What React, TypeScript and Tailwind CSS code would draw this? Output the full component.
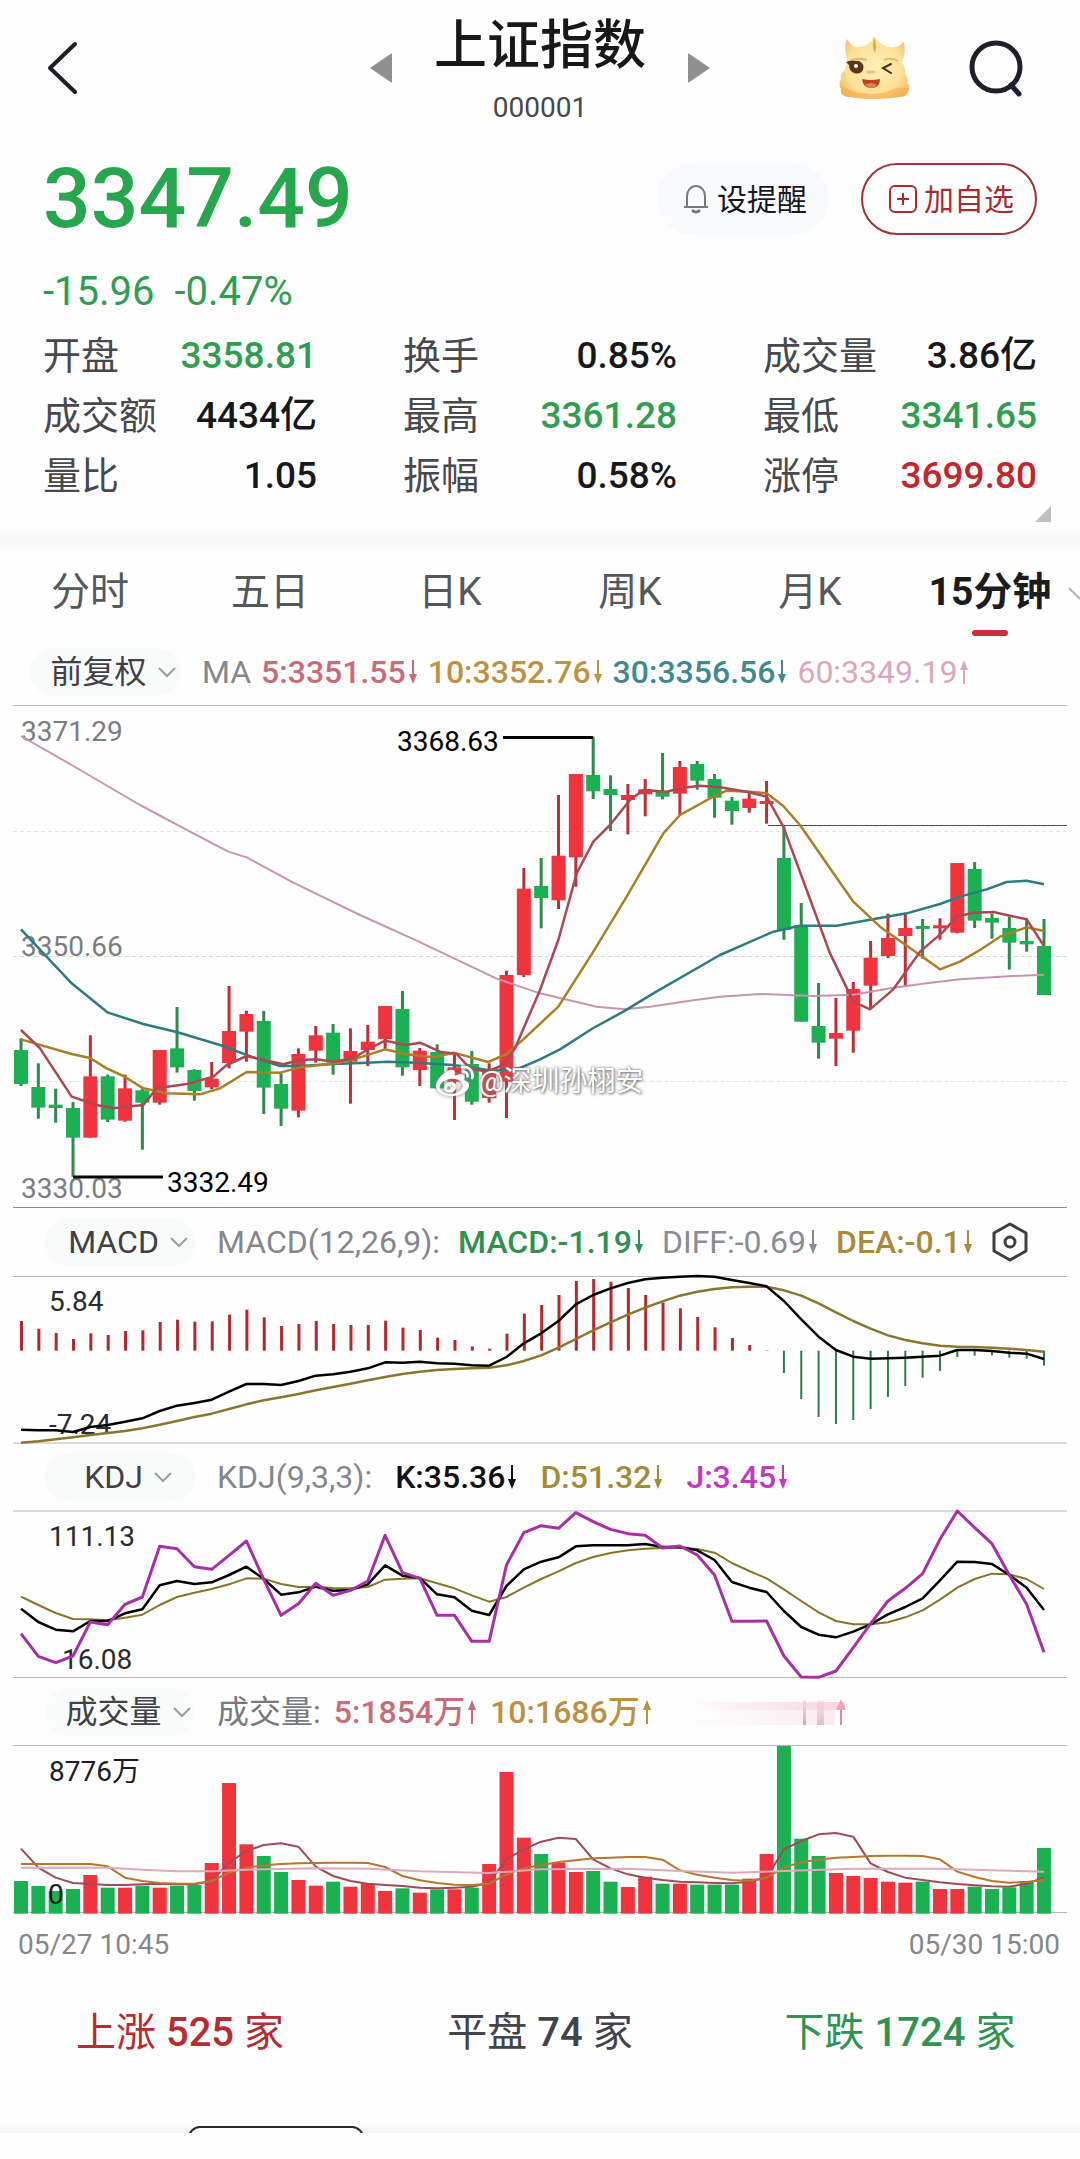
import React from "react";
import { FaWeibo } from "react-icons/fa";

const RED = "#f1333d";
const GREEN = "#1bb052";
const FIRST_X = 21;
const STEP = 1023 / 59;
const xAt = (i: number) => FIRST_X + i * STEP;

/* high, body top, body bottom, low (thirds of a pixel), r = rising, g = falling */
type Candle = [number, number, number, number, "r" | "g"];
const CANDLES: Candle[] = [
  [1015, 1050, 1152, 1158, "g"], [1090, 1161, 1223, 1256, "g"], [1166, 1214, 1224, 1268, "g"],
  [1206, 1224, 1313, 1430, "g"], [1006, 1129, 1313, 1313, "r"], [1124, 1129, 1259, 1266, "g"],
  [1124, 1165, 1262, 1265, "r"], [1165, 1171, 1208, 1349, "g"], [1050, 1050, 1208, 1214, "r"],
  [921, 1045, 1102, 1118, "g"], [1108, 1110, 1173, 1202, "g"], [1086, 1136, 1162, 1168, "r"],
  [858, 993, 1089, 1105, "r"], [932, 942, 995, 1085, "r"], [933, 963, 1163, 1242, "g"],
  [1120, 1152, 1226, 1278, "g"], [1045, 1062, 1232, 1252, "r"], [978, 1006, 1052, 1088, "r"],
  [972, 998, 1088, 1124, "g"], [985, 1053, 1085, 1211, "r"], [975, 1025, 1050, 1098, "r"],
  [918, 918, 1017, 1048, "r"], [873, 927, 1102, 1127, "g"], [1044, 1052, 1110, 1158, "r"],
  [1033, 1056, 1165, 1165, "g"], [1060, 1102, 1145, 1260, "r"], [1053, 1092, 1205, 1214, "g"],
  [1090, 1115, 1194, 1208, "r"], [812, 825, 1145, 1254, "r"], [504, 566, 825, 831, "r"],
  [474, 558, 594, 685, "g"], [285, 467, 601, 627, "r"], [222, 222, 472, 560, "r"],
  [110, 225, 274, 297, "g"], [226, 267, 285, 393, "g"], [252, 285, 300, 403, "r"],
  [237, 268, 283, 349, "r"], [159, 275, 290, 298, "g"], [183, 201, 281, 345, "r"],
  [183, 192, 242, 269, "g"], [222, 237, 293, 353, "g"], [291, 302, 333, 374, "g"],
  [280, 296, 324, 338, "r"], [243, 303, 312, 371, "r"], [380, 474, 690, 719, "g"],
  [609, 675, 965, 965, "g"], [849, 978, 1028, 1076, "g"], [894, 999, 1016, 1098, "r"],
  [846, 867, 992, 1058, "r"], [723, 773, 857, 925, "r"], [641, 714, 768, 774, "r"],
  [642, 684, 708, 858, "r"], [657, 678, 685, 776, "g"], [655, 676, 683, 719, "r"],
  [489, 489, 698, 700, "r"], [486, 507, 662, 684, "g"], [641, 654, 668, 716, "g"],
  [650, 684, 728, 809, "g"], [655, 723, 733, 755, "g"], [657, 738, 885, 885, "g"],
];

const PRICE_MA60 = [63,108,215,195,420,315,580,400,685,455,740,472,880,548,1080,645,1250,722,1490,836,1620,880,1790,920,1875,928,1950,920,2080,901,2160,890,2280,882,2440,888,2560,884,2680,863,2780,850,2880,838,3000,830,3132,824];
const PRICE_MA30 = [63,688,215,850,322,937,430,972,530,996,660,1035,760,1072,840,1098,900,1098,1000,1092,1100,1088,1160,1085,1250,1088,1360,1095,1480,1112,1560,1104,1620,1078,1680,1048,1780,984,1870,935,1960,880,2160,765,2320,695,2400,677,2510,677,2660,650,2720,640,2820,612,2880,590,2960,568,3020,546,3080,542,3132,553];
const PRICE_MA10 = [63,1018,215,1062,270,1074,320,1105,370,1128,430,1165,500,1180,600,1183,660,1165,740,1116,840,1118,900,1102,960,1095,1010,1090,1080,1072,1155,1048,1220,1063,1300,1072,1360,1058,1465,1086,1520,1062,1570,1018,1675,920,1780,755,1880,590,1990,400,2040,345,2140,290,2180,272,2250,275,2300,280,2350,318,2400,375,2490,505,2560,605,2640,680,2820,808,2880,785,2940,750,3000,710,3080,682,3132,693];
const PRICE_MA5 = [63,990,120,1045,215,1190,290,1215,340,1225,430,1215,470,1165,560,1152,640,1130,680,1095,740,1068,850,1093,900,1080,950,1078,1000,1085,1060,1075,1100,1050,1155,1022,1220,1035,1260,1028,1320,1055,1370,1062,1410,1105,1460,1115,1510,1095,1545,1045,1620,870,1675,720,1730,520,1780,425,1830,375,1890,300,1930,270,2000,275,2040,265,2100,257,2160,262,2240,275,2300,290,2350,380,2420,570,2490,760,2560,905,2610,928,2680,868,2760,755,2830,695,2870,650,2920,638,2980,636,3080,658,3132,738];

const MACD_BARS = [330,353,366,384,367,372,360,358,333,326,332,331,311,296,319,345,339,330,339,342,342,329,350,357,380,387,406,413,368,308,282,252,210,204,212,231,252,275,292,318,349,381,402,418,486,564,618,639,627,594,558,525,500,480,438,434,433,440,443,464];
const MACD_DIFF = [656,658,658,663,648,642,632,622,600,584,576,566,542,519,519,522,510,494,490,482,472,454,455,452,457,458,463,464,438,397,367,330,280,252,232,216,205,200,197,195,197,207,216,226,270,325,377,417,437,443,442,440,437,434,417,417,420,425,428,444];
const MACD_DEA = [695,691,685,679,672,666,660,652,641,630,618,608,594,580,568,559,549,538,528,518,508,498,489,482,477,474,472,470,463,450,433,410,384,358,334,311,290,271,254,242,234,229,227,227,238,254,277,304,330,353,373,387,397,404,407,408,410,413,417,422];

const KDJ_J = [1268,1336,1355,1335,1233,1241,1180,1158,1006,1013,1067,1075,1033,990,1105,1213,1178,1117,1153,1138,1110,973,1085,1102,1213,1213,1291,1291,1062,965,944,952,905,932,955,968,973,1011,1005,1032,1092,1231,1231,1230,1335,1398,1399,1380,1310,1238,1170,1132,1088,985,900,950,998,1092,1180,1324];
const KDJ_K = [1193,1233,1256,1261,1230,1230,1207,1195,1123,1110,1119,1114,1092,1067,1104,1151,1144,1127,1139,1137,1120,1063,1094,1101,1150,1159,1199,1212,1125,1075,1052,1039,1006,1003,1003,1003,999,1008,1008,1018,1047,1113,1130,1143,1200,1248,1271,1279,1262,1240,1210,1188,1162,1108,1052,1053,1059,1092,1130,1197];
const KDJ_D = [1157,1182,1206,1224,1225,1228,1220,1211,1182,1158,1145,1134,1120,1102,1103,1119,1128,1127,1131,1132,1128,1106,1103,1102,1117,1132,1153,1172,1158,1130,1104,1081,1056,1038,1026,1018,1013,1011,1010,1014,1025,1056,1080,1102,1135,1170,1204,1230,1240,1240,1234,1219,1198,1166,1130,1104,1088,1090,1104,1134];

const VOLUME = [600,615,630,624,582,620,620,614,620,614,612,546,306,490,525,573,597,614,602,617,608,630,622,635,625,625,620,549,273,470,519,545,573,570,602,618,587,608,608,611,611,611,593,519,195,473,525,576,585,591,602,605,602,624,624,617,624,619,600,501];
const VOLUME_SIDE = "ggggrgrgrggrrrggrrgrrrgrgrgrrrgrrggrrgrgggrrgggrrrrrgrrggggg";
const VOL_MA5 = [503,560,590,606,609,612,612,610,608,610,610,600,545,510,492,487,497,557,585,600,608,612,615,620,622,620,617,605,535,505,482,470,474,535,562,580,590,597,602,604,606,607,602,590,505,480,460,456,467,547,573,590,597,604,609,613,616,617,608,590];
const VOL_MA10 = [549,549,549,549,549,556,590,600,606,608,608,600,575,560,553,549,547,546,545,545,546,558,585,598,606,611,612,608,580,562,553,543,538,532,530,528,528,536,568,581,590,597,600,590,560,543,536,530,528,525,524,524,525,535,572,588,600,605,603,597];
const VOL_MA60: [number, number][] = [[0,560],[5,560],[7,566],[9,571],[11,571],[13,566],[17,562],[20,563],[23,571],[27,576],[30,565],[35,563],[38,570],[41,575],[44,570],[48,563],[53,563],[56,568],[59,572]];

const pairs = (a: number[]) => {
  const out: string[] = [];
  for (let i = 0; i < a.length; i += 2) out.push(`${a[i] / 3},${a[i + 1] / 3}`);
  return out.join(" ");
};
const series = (a: number[]) => a.map((v, i) => `${xAt(i)},${v / 3}`).join(" ");

function Line({ points, color, width = 2.5 }: { points: string; color: string; width?: number }) {
  return <polyline points={points} fill="none" stroke={color} strokeWidth={width} strokeLinejoin="round" />;
}

function Rule({ y, from = 13, to = 1067, color = "#b8b8b8" }: { y: number; from?: number; to?: number; color?: string }) {
  return <line x1={from} x2={to} y1={y} y2={y} stroke={color} strokeWidth={1} />;
}

function PriceChart() {
  return (
    <svg viewBox="0 5 1080 504" className="block h-auto w-full" role="img" aria-label="15分钟 K线图">
      <Rule y={5.5} />
      <Rule y={507.5} color="#8f8f8f" />
      {[131, 256, 381].map((y) => (
        <line key={y} x1={13} x2={1067} y1={y + 0.5} y2={y + 0.5} stroke={y === 256 ? "#d6d6d6" : "#e4e4e4"} strokeDasharray="4 3" />
      ))}
      <line x1={768} x2={1067} y1={125.5} y2={125.5} stroke="#505050" />
      <g fontSize={28} fill="#7b7d80">
        <text x={21} y={41}>3371.29</text>
        <text x={21} y={256}>3350.66</text>
        <text x={21} y={498}>3330.03</text>
      </g>
      {CANDLES.map(([hi, top, bottom, lo, side], i) => {
        const x = xAt(i);
        return (
          <g key={i}>
            <rect x={x - 1.5} y={hi / 3} width={3} height={(lo - hi) / 3} fill={side === "r" ? "#c22d35" : "#2c8c4a"} />
            <rect x={x - 7} y={top / 3} width={14} height={Math.max(3, (bottom - top) / 3)} fill={side === "r" ? RED : GREEN} />
          </g>
        );
      })}
      <Line points={pairs(PRICE_MA60)} color="#cb94ae" width={2} />
      <Line points={pairs(PRICE_MA30)} color="#2c7c80" />
      <Line points={pairs(PRICE_MA10)} color="#ab7f24" />
      <Line points={pairs(PRICE_MA5)} color="#ad4852" />
      <path d="M503 37.5H593" stroke="#000" strokeWidth={3} />
      <path d="M73 477H163" stroke="#000" strokeWidth={3} />
      <g fontSize={28} fill="#000">
        <text x={397} y={51}>3368.63</text>
        <text x={167} y={492}>3332.49</text>
      </g>
    </svg>
  );
}

function MacdChart() {
  return (
    <svg viewBox="0 64 1080 169" className="block h-auto w-full overflow-visible" role="img" aria-label="MACD">
      <Rule y={65.5} />
      <Rule y={232} />
      <g fontSize={28} fill="#2b2b2d">
        <text x={49} y={100}>5.84</text>
        <text x={49} y={223}>-7.24</text>
      </g>
      {MACD_BARS.map((v, i) => (
        <rect key={i} x={xAt(i) - 1} y={Math.min(v, 419) / 3} width={v < 419 ? 3 : 2} height={Math.abs(v - 419) / 3} fill={v < 419 ? "#b5292e" : "#2d7d4c"} />
      ))}
      <Line points={series(MACD_DEA)} color="#8c752c" />
      <Line points={series(MACD_DIFF)} color="#000" />
    </svg>
  );
}

function KdjChart() {
  return (
    <svg viewBox="0 299 1080 169" className="block h-auto w-full overflow-visible" role="img" aria-label="KDJ">
      <Rule y={300} />
      <Rule y={466.5} />
      <g fontSize={28} fill="#2b2b2d">
        <text x={49} y={335}>111.13</text>
        <text x={62} y={458}>16.08</text>
      </g>
      <Line points={series(KDJ_D)} color="#85762a" width={2} />
      <Line points={series(KDJ_K)} color="#000" />
      <Line points={series(KDJ_J)} color="#aa2ea8" width={3} />
    </svg>
  );
}

function VolumeChart() {
  return (
    <svg viewBox="0 64 1080 170" className="block h-auto w-full" role="img" aria-label="成交量">
      <Rule y={64.5} />
      <Rule y={231.5} />
      {VOLUME.map((v, i) => (
        <rect key={i} x={xAt(i) - 7} y={v / 3} width={14} height={(698 - v) / 3} fill={VOLUME_SIDE[i] === "r" ? RED : GREEN} />
      ))}
      <Line points={series(VOL_MA5)} color="#a04c58" width={2} />
      <Line points={series(VOL_MA10)} color="#b5782c" width={2} />
      <Line points={VOL_MA60.map(([i, v]) => `${xAt(i)},${v / 3}`).join(" ")} color="#dfa9bd" width={2} />
      <g fontSize={28} fill="#1d1d1f">
        <text x={49} y={100}>8776万</text>
        <text x={48} y={223}>0</text>
      </g>
    </svg>
  );
}

function Arrow({ up = false }: { up?: boolean }) {
  return (
    <svg width="10" height="26" viewBox="0 0 10 26" className={up ? "rotate-180" : ""} aria-hidden="true">
      <path d="M5 1V20" stroke="currentColor" strokeWidth="2" />
      <path d="M1 15H9L5 25Z" fill="currentColor" />
    </svg>
  );
}

function Reading({ text, color, dir, strong = true }: { text: string; color: string; dir: "up" | "down"; strong?: boolean }) {
  return (
    <span className={`flex items-center gap-[2px] ${strong ? "font-medium" : ""} ${color}`}>
      {text}
      <Arrow up={dir === "up"} />
    </span>
  );
}

function Picker({ label }: { label: string }) {
  return (
    <button type="button" className="flex h-[48px] w-[150px] shrink-0 items-center justify-center gap-[10px] rounded-full bg-[#f9fbfb] pl-[17px] text-[#3f4145]">
      {label}
      <svg width="20" height="12" viewBox="0 0 20 12" fill="none" stroke="#9a9c9f" strokeWidth="2" aria-hidden="true">
        <path d="M2 2L10 10L18 2" />
      </svg>
    </button>
  );
}

function Indicator({ label, gap, children }: { label: string; gap: string; children: React.ReactNode }) {
  return (
    <div className="flex h-[66px] items-center pl-[45px] text-[32px] leading-[40px] whitespace-nowrap">
      <Picker label={label} />
      <div className={`ml-[22px] flex items-center ${gap}`}>{children}</div>
    </div>
  );
}

function Mascot() {
  return (
    <svg width="74" height="66" viewBox="0 0 74 66" aria-hidden="true">
      <defs>
        <radialGradient id="face" cx="0.5" cy="0.5" r="0.62">
          <stop offset="0" stopColor="#fff0b8" />
          <stop offset="0.65" stopColor="#fce199" />
          <stop offset="1" stopColor="#f4b75e" />
        </radialGradient>
      </defs>
      <path d="M11 28Q6 12 10 4Q14 11 20 12Q28 12 32 8Q35 7 37 1Q40 7 45 9Q52 13 57 12Q64 12 66 6Q70 14 65 28Q69 32 68 39Q72 43 70 48Q74 52 71 57Q70 62 62 62Q36 66 12 62Q3 62 4 54Q1 50 4 44Q3 38 8 35Q8 31 11 28Z" fill="url(#face)" />
      <path d="M4 50Q18 59 26 58Q44 61 56 54Q65 51 71 54Q70 61 62 62Q36 66 12 62Q3 61 4 50Z" fill="#f4ac48" opacity="0.55" />
      <path d="M37 3Q34 11 38 18Q41 11 37 3Z" fill="#dcb04d" />
      <path d="M13 26Q20 22 30 25M47 25Q54 22 61 26" stroke="#efb575" strokeWidth="2" fill="none" />
      <path d="M9 27Q13 25 22 26Q28 29 26 35Q23 40 17 38Q12 36 12 30Z" fill="#5f3318" />
      <circle cx="19" cy="31" r="2" fill="#fff" />
      <path d="M54 29L46 33L54 38" stroke="#4a3018" strokeWidth="2" fill="none" strokeLinecap="round" />
      <path d="M31 37H37" stroke="#e6c778" strokeWidth="3" strokeLinecap="round" />
      <path d="M25 44Q34 46 43 44Q43 53 34 53Q26 53 25 44Z" fill="#b94223" />
      <path d="M28 50Q34 46 40 50Q38 53 34 53Q30 53 28 50Z" fill="#ee7a4a" />
    </svg>
  );
}

const STATS: [string, string, string][] = [
  ["开盘", "3358.81", "text-[#2f9e50]"],
  ["换手", "0.85%", "text-[#18181b]"],
  ["成交量", "3.86亿", "text-[#18181b]"],
  ["成交额", "4434亿", "text-[#18181b]"],
  ["最高", "3361.28", "text-[#2f9e50]"],
  ["最低", "3341.65", "text-[#2f9e50]"],
  ["量比", "1.05", "text-[#18181b]"],
  ["振幅", "0.58%", "text-[#18181b]"],
  ["涨停", "3699.80", "text-[#c4262e]"],
];

const TABS = ["分时", "五日", "日K", "周K", "月K", "15分钟"];

export default function App() {
  return (
    <main className="min-h-screen w-full overflow-hidden bg-[#fefefe] font-['Roboto','Noto_Sans_CJK_SC',sans-serif] text-[#18181b]">
      <header className="grid h-[136px] grid-cols-[1fr_auto_1fr] items-center px-[45px]">
        <button type="button" aria-label="返回" className="w-[34px]">
          <svg width="34" height="54" viewBox="0 0 34 54" fill="none" stroke="#1c1c22" strokeWidth="4" strokeLinecap="round" strokeLinejoin="round">
            <path d="M30 3L5 27L30 51" />
          </svg>
        </button>
        <div className="flex items-center gap-[42px]">
          <button type="button" aria-label="上一个">
            <svg width="22" height="30" viewBox="0 0 22 30"><path d="M22 0V30L0 15Z" fill="#8f8f8f" /></svg>
          </button>
          <div className="flex flex-col items-center gap-2">
            <h1 className="text-[53px] leading-[72px] font-medium">上证指数</h1>
            <span className="text-[28px] leading-[36px] text-[#46484d]">000001</span>
          </div>
          <button type="button" aria-label="下一个">
            <svg width="22" height="30" viewBox="0 0 22 30"><path d="M0 0V30L22 15Z" fill="#8f8f8f" /></svg>
          </button>
        </div>
        <div className="flex items-center justify-end gap-[56px] pr-3">
          <button type="button" aria-label="智能助手"><Mascot /></button>
          <button type="button" aria-label="搜索">
            <svg width="56" height="58" viewBox="0 0 56 58" fill="none" stroke="#1d1f2b" strokeWidth="5">
              <circle cx="29" cy="28" r="24" />
              <path d="M44 46L52 55" strokeLinecap="round" />
            </svg>
          </button>
        </div>
      </header>

      <section className="relative px-[43px] pt-[19px]">
        <div className="flex items-center">
          <strong className="text-[84px] leading-[88px] font-medium text-[#26a74e]">3347.49</strong>
          <button type="button" className="ml-auto flex h-[72px] w-[172px] items-center justify-center gap-[8px] rounded-full bg-[#f9fafd] pl-1 text-[30px]">
            <svg width="26" height="30" viewBox="0 0 26 30" fill="none" stroke="#77797d" strokeWidth="2" aria-hidden="true">
              <path d="M4 23V12A9 10 0 0 1 22 12V23M1 23H25" />
              <path d="M9 26Q13 30 17 26" strokeWidth="3" />
            </svg>
            设提醒
          </button>
          <button type="button" className="ml-[32px] flex h-[72px] w-[176px] items-center justify-center gap-[6px] rounded-full border-2 border-[#a33238] pl-1 text-[30px] text-[#a82b31]">
            <svg width="30" height="30" viewBox="0 0 30 30" fill="none" stroke="currentColor" strokeWidth="2" aria-hidden="true">
              <rect x="2" y="2" width="26" height="26" rx="5" />
              <path d="M9 15H21M15 9V21" />
            </svg>
            加自选
          </button>
        </div>
        <p className="mt-[23px] flex gap-[20px] text-[40px] leading-[52px] text-[#2f9e50]">
          <span>-15.96</span>
          <span>-0.47%</span>
        </p>
        <dl className="mt-[8px] grid grid-cols-3 gap-x-[86px] leading-[60px] whitespace-nowrap">
          {STATS.map(([name, value, color]) => (
            <div key={name} className="flex justify-between">
              <dt className="text-[38px] text-[#47494d]">{name}</dt>
              <dd className={`text-[37px] font-medium ${color}`}>{value}</dd>
            </div>
          ))}
        </dl>
        <svg width="16" height="16" viewBox="0 0 16 16" className="mr-[-14px] ml-auto" aria-hidden="true">
          <path d="M16 0V16H0Z" fill="#bfbfbf" />
        </svg>
      </section>

      <div className="mt-[8px] h-[20px] bg-gradient-to-b from-[#fdfdfd] via-[#f7f8f8] to-[#fbfbfb]" />

      <nav role="tablist" className="relative grid h-[97px] grid-cols-6 pt-[14px]">
        {TABS.map((tab) => {
          const active = tab === "15分钟";
          return (
            <button key={tab} type="button" role="tab" aria-selected={active} className={active ? "flex flex-col items-center gap-[10px] text-[39px] leading-[56px] font-bold text-[#1c1c20]" : "flex flex-col items-center text-[39px] leading-[56px] text-[#55575b]"}>
              {tab}
              {active && <span className="h-[6px] w-[36px] rounded-full bg-[#c9303a]" />}
            </button>
          );
        })}
        <svg width="12" height="18" viewBox="0 0 12 18" className="absolute top-[34px] right-0" fill="none" stroke="#b5b5b8" strokeWidth="2" aria-hidden="true">
          <path d="M1 4L13 16" />
        </svg>
      </nav>

      <div className="flex h-[58px] items-center pb-[8px] pl-[30px] text-[32px] leading-[40px] whitespace-nowrap">
        <Picker label="前复权" />
        <div className="ml-[22px] flex items-center gap-[10px]">
          <span className="text-[#85878b]">MA</span>
          <Reading text="5:3351.55" color="text-[#c96b78]" dir="down" />
          <Reading text="10:3352.76" color="text-[#bd9242]" dir="down" />
          <Reading text="30:3356.56" color="text-[#3f8a8d]" dir="down" />
          <Reading text="60:3349.19" color="text-[#dea6bb]" dir="up" strong={false} />
        </div>
      </div>

      <div className="relative">
        <PriceChart />
        <div className="absolute inset-x-0 bottom-[107px] flex items-center justify-center gap-1 text-[28px] leading-[40px] text-white [text-shadow:0_0_3px_#777,1px_1px_3px_#777]">
          <FaWeibo className="size-[38px] [filter:drop-shadow(0_0_2px_#777)]" aria-hidden="true" />
          @深圳孙栩安
        </div>
      </div>

      <div className="relative">
        <Indicator label="MACD" gap="gap-[18px]">
          <span className="text-[#85878b]">MACD(12,26,9):</span>
          <Reading text="MACD:-1.19" color="text-[#2f9150]" dir="down" />
          <Reading text="DIFF:-0.69" color="text-[#8a8c90]" dir="down" strong={false} />
          <Reading text="DEA:-0.1" color="text-[#a88a3a]" dir="down" />
          <button type="button" aria-label="指标设置">
            <svg width="38" height="40" viewBox="0 0 38 40" fill="none" stroke="#3c3e42" strokeWidth="3" strokeLinejoin="round">
              <path d="M19 2L35 11V29L19 38L3 29V11Z" />
              <circle cx="19" cy="20" r="5" />
            </svg>
          </button>
        </Indicator>
        <MacdChart />
      </div>

      <Indicator label="KDJ" gap="gap-[23px]">
        <span className="text-[#85878b]">KDJ(9,3,3):</span>
        <Reading text="K:35.36" color="text-[#111113]" dir="down" />
        <Reading text="D:51.32" color="text-[#a38b3a]" dir="down" />
        <Reading text="J:3.45" color="text-[#c436c4]" dir="down" />
      </Indicator>
      <KdjChart />

      <Indicator label="成交量" gap="gap-[13px]">
        <span className="text-[#77797d]">成交量:</span>
        <Reading text="5:1854万" color="text-[#c96b78]" dir="up" />
        <Reading text="10:1686万" color="text-[#bd8f42]" dir="up" />
        <svg width="190" height="28" viewBox="-20 0 190 28" aria-hidden="true">
          <defs>
            <linearGradient id="fadeX"><stop offset="0" stopColor="#f3b3c4" stopOpacity="0" /><stop offset="1" stopColor="#f3b3c4" /></linearGradient>
            <linearGradient id="streak" x2="0" y2="1"><stop offset="0" stopColor="#f0c3cf" stopOpacity="0.4" /><stop offset="1" stopColor="#cfa9b4" /></linearGradient>
          </defs>
          <rect x="0" y="4" width="160" height="8" fill="url(#fadeX)" opacity="0.55" />
          <rect x="0" y="12" width="150" height="15" fill="url(#fadeX)" opacity="0.25" />
          <rect x="118" y="2" width="3" height="25" fill="url(#streak)" />
          <rect x="132" y="2" width="7" height="25" fill="url(#streak)" opacity="0.7" />
          <path d="M156 27V5" stroke="#dc8ca2" strokeWidth="2" />
          <path d="M151 12L156 1L161 12Z" fill="#eda3b5" />
        </svg>
      </Indicator>
      <VolumeChart />

      <div className="flex justify-between pt-[10px] pr-[20px] pl-[18px] text-[28px] leading-[40px] text-[#85878b]">
        <time>05/27 10:45</time>
        <time>05/30 15:00</time>
      </div>

      <section className="grid grid-cols-3 pt-[40px] text-center text-[40px] leading-[56px]">
        <p className="text-[#b92b31]">上涨 <b className="font-medium">525</b> 家</p>
        <p className="text-[#424449]">平盘 <b className="font-medium">74</b> 家</p>
        <p className="text-[#2f9450]">下跌 <b className="font-medium">1724</b> 家</p>
      </section>

      <footer className="mt-[60px] h-[12px] overflow-hidden bg-gradient-to-b from-[#fefefe] to-[#f3f4f5] pl-[188px]">
        <div className="mt-[5px] h-[30px] w-[176px] rounded-[12px] border-2 border-[#26272b] bg-white" />
      </footer>
    </main>
  );
}
